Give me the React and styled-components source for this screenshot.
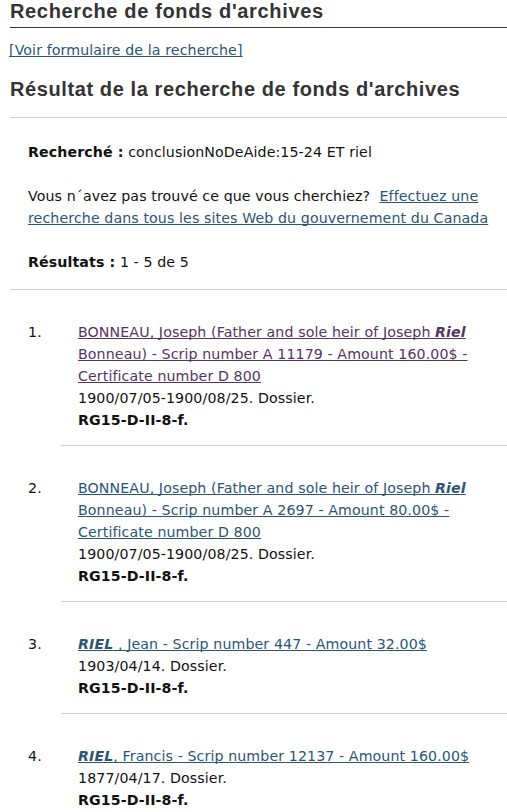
import React from "react";
import styled, { createGlobalStyle } from "styled-components";

const Global = createGlobalStyle`
  html, body { margin: 0; padding: 0; background: #fff; }
  body {
    font-family: "DejaVu Sans", Verdana, sans-serif;
    font-size: 14.2px;
    letter-spacing: 0.1px;
    line-height: 22px;
    color: #111;
  }
`;

const Page = styled.main`
  padding-left: 10px;
`;

const Title = styled.h1`
  margin: 0;
  font-family: "Liberation Sans", Arial, sans-serif;
  font-weight: bold;
  font-size: 20px;
  letter-spacing: 0.65px;
  line-height: 22px;
  color: #333;
  padding-bottom: 5px;
  border-bottom: 1px solid #333;
`;

const Link = styled.a`
  color: ${(p) => (p.$visited ? "#553462" : "#2b5576")};
  text-decoration: underline;
  text-decoration-skip-ink: none;
  cursor: pointer;
`;

const FormLink = styled.p`
  margin: 11px 0 0 -1px;
`;

const Subtitle = styled.h2`
  margin: 17px 0 0;
  font-family: "Liberation Sans", Arial, sans-serif;
  font-weight: bold;
  font-size: 20px;
  letter-spacing: 0.6px;
  line-height: 22px;
  color: #333;
`;

const Rule = styled.hr`
  margin: ${(p) => p.$margin || "0"};
  border: 0;
  border-top: 1px solid #d0d0d0;
  height: 0;
`;

const Summary = styled.section`
  padding: 23px 0 16px 18px;
  display: flex;
  flex-direction: column;
  gap: 22px;
`;

const Line = styled.p`
  margin: 0;
`;

const Results = styled.ol`
  list-style: none;
  margin: 0;
  padding: 0;
`;

const Item = styled.li`
  display: grid;
  grid-template-columns: 50px 1fr;
  padding: 31px 0 14px 18px;
  width: 490px;
`;

const Num = styled.span``;

const Body = styled.div`
  display: flex;
  flex-direction: column;
`;

const Ref = styled.strong`
  font-weight: bold;
`;

const Hit = styled.b`
  font-style: italic;
`;

const results = [
  {
    visited: true,
    title: (
      <>
        BONNEAU, Joseph (Father and sole heir of Joseph <Hit>Riel</Hit> Bonneau) - Scrip
        number A 11179 - Amount 160.00$ - Certificate number D 800
      </>
    ),
    date: "1900/07/05-1900/08/25. Dossier.",
  },
  {
    title: (
      <>
        BONNEAU, Joseph (Father and sole heir of Joseph <Hit>Riel</Hit> Bonneau) - Scrip
        number A 2697 - Amount 80.00$ - Certificate number D 800
      </>
    ),
    date: "1900/07/05-1900/08/25. Dossier.",
  },
  {
    title: (
      <>
        <Hit>RIEL</Hit> , Jean - Scrip number 447 - Amount 32.00$
      </>
    ),
    date: "1903/04/14. Dossier.",
  },
  {
    title: (
      <>
        <Hit>RIEL</Hit>, Francis - Scrip number 12137 - Amount 160.00$
      </>
    ),
    date: "1877/04/17. Dossier.",
  },
];

export default function App() {
  return (
    <>
      <Global />
      <Page>
        <Title>Recherche de fonds d'archives</Title>
        <FormLink>
          <Link>[Voir formulaire de la recherche]</Link>
        </FormLink>
        <Subtitle>Résultat de la recherche de fonds d'archives</Subtitle>
        <Rule $margin="17px 0 0" />
        <Summary>
          <Line>
            <strong>Recherché :</strong> conclusionNoDeAide:15-24 ET riel
          </Line>
          <Line>
            Vous n´avez pas trouvé ce que vous cherchiez?&nbsp;{" "}
            <Link>Effectuez une recherche dans tous les sites Web du gouvernement du Canada</Link>
          </Line>
          <Line>
            <strong>Résultats :</strong> 1 - 5 de 5
          </Line>
        </Summary>
        <Rule />
        <Results>
          {results.map((r, i) => (
            <React.Fragment key={i}>
              <Item>
                <Num>{i + 1}.</Num>
                <Body>
                  <Link $visited={r.visited}>{r.title}</Link>
                  <span>{r.date}</span>
                  <Ref>RG15-D-II-8-f.</Ref>
                </Body>
              </Item>
              <Rule $margin="0 0 0 51px" />
            </React.Fragment>
          ))}
        </Results>
      </Page>
    </>
  );
}
